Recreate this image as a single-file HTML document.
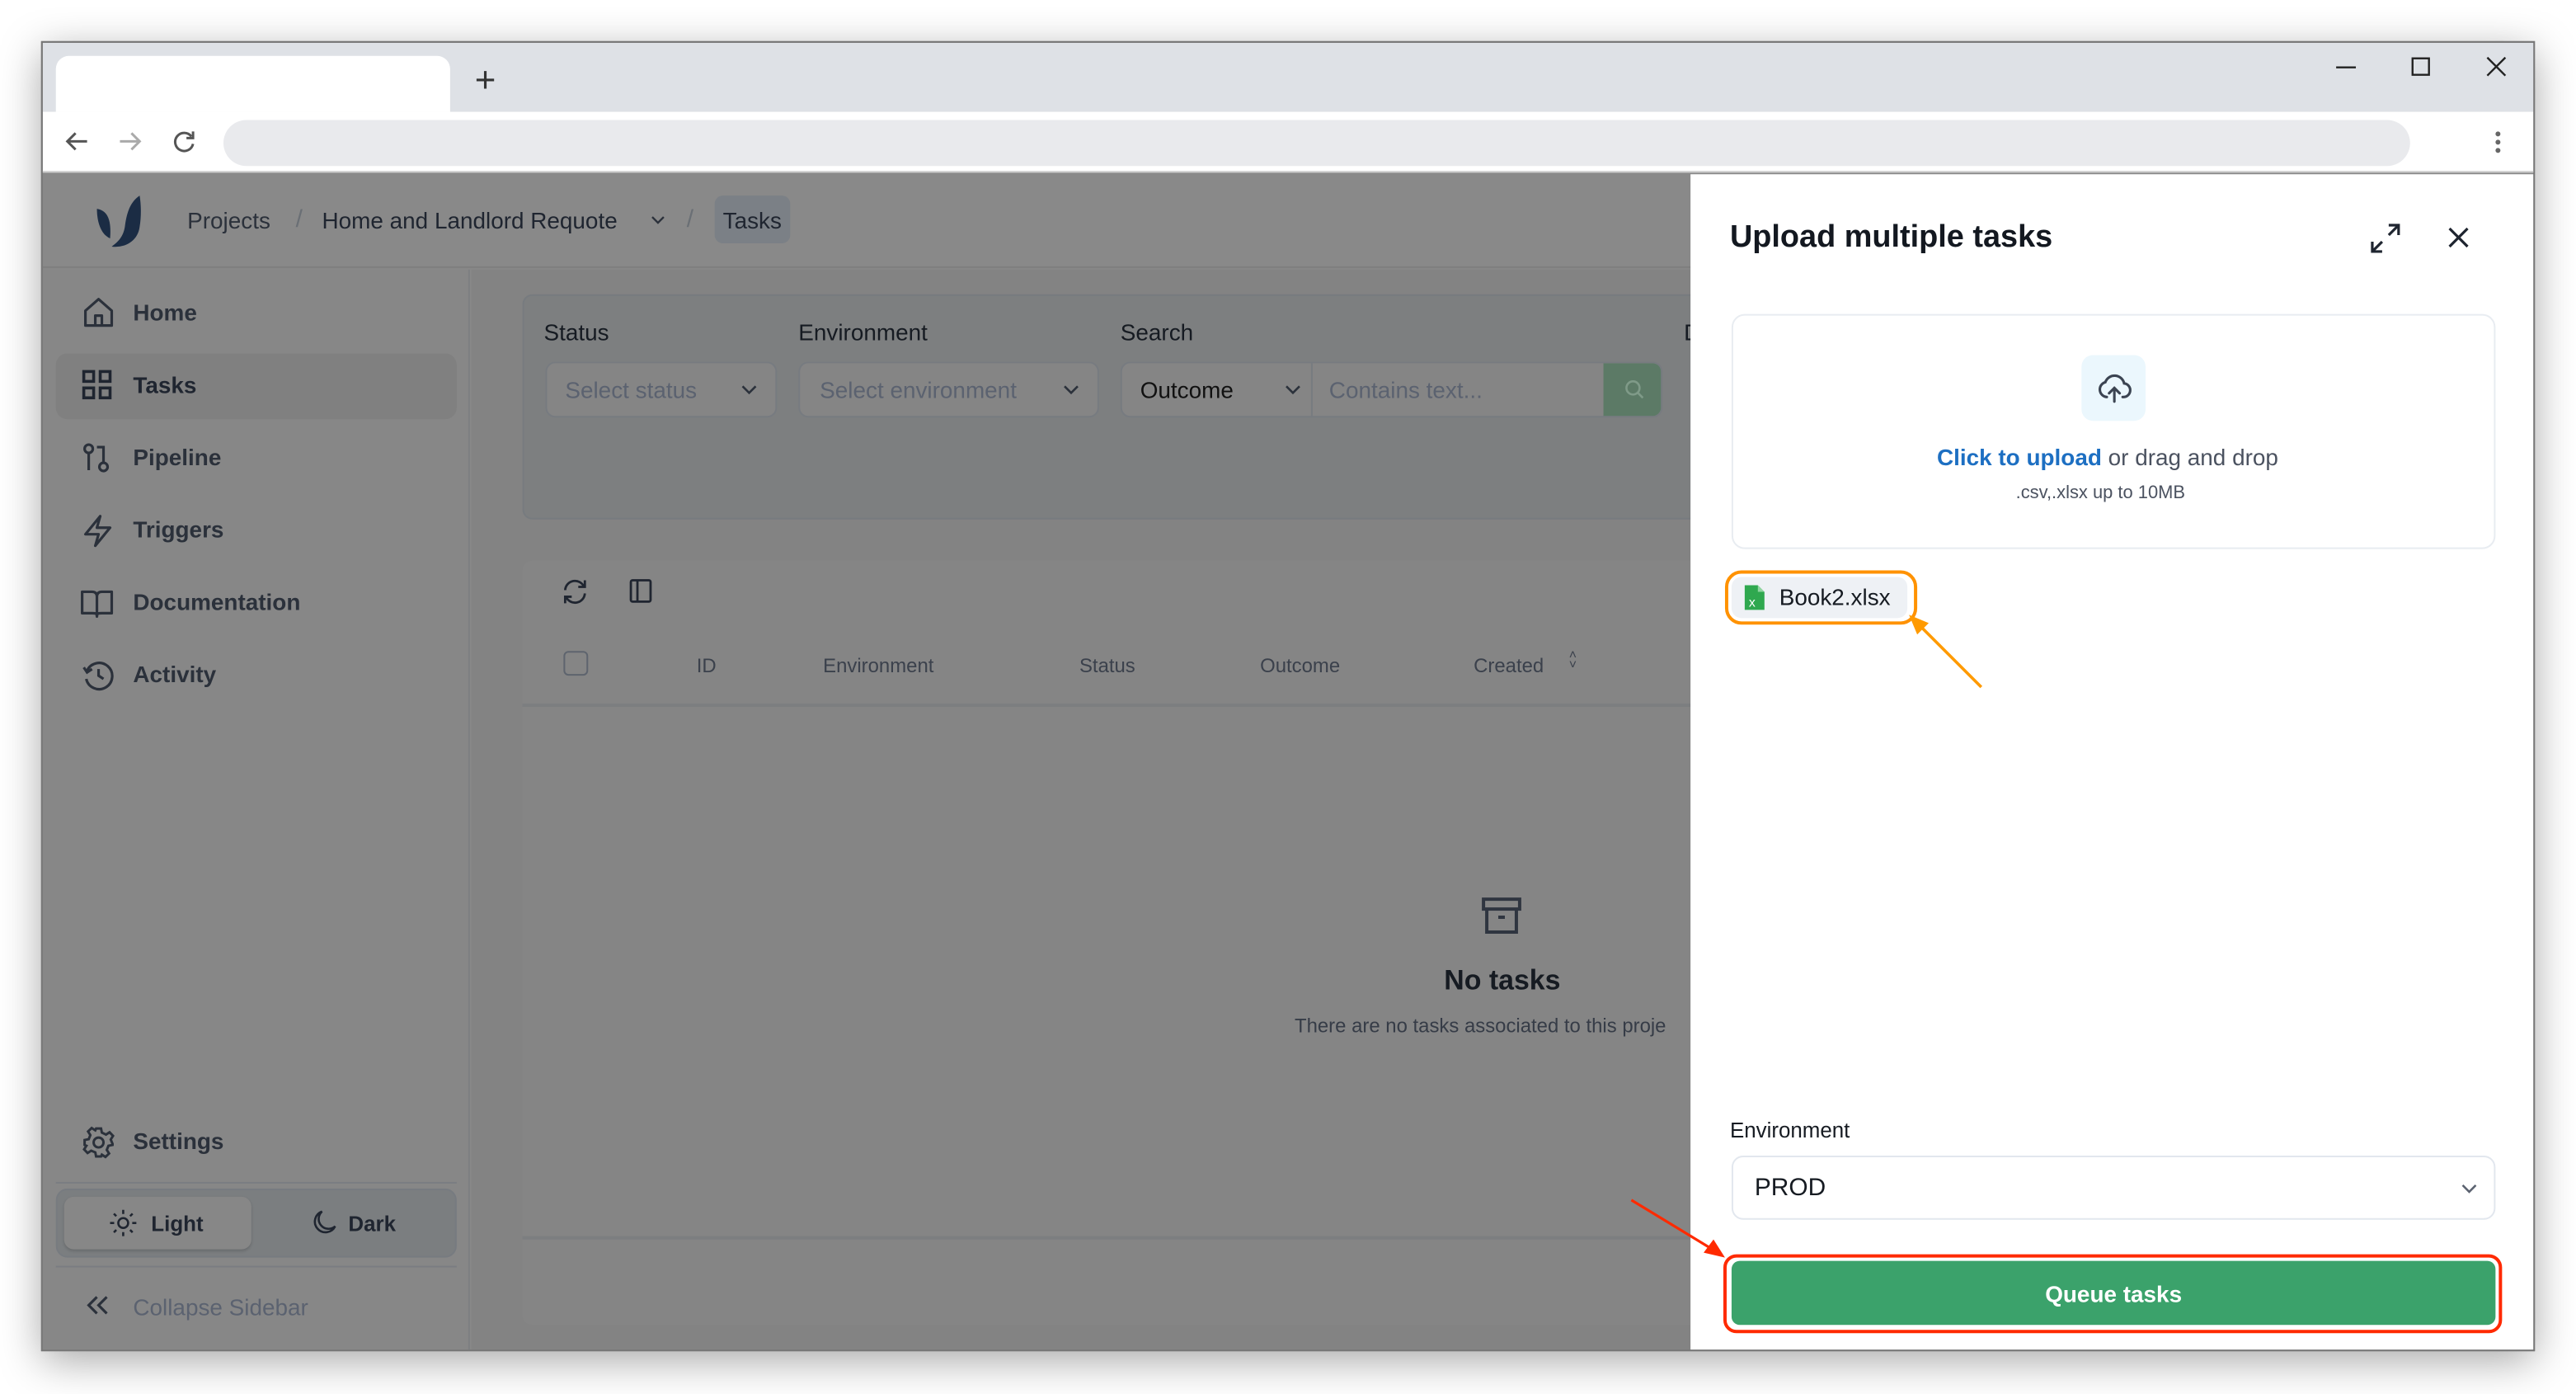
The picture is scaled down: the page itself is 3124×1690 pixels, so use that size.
<!DOCTYPE html>
<html><head><meta charset="utf-8">
<style>
*{box-sizing:border-box;margin:0;padding:0}
html,body{width:3124px;height:1690px;overflow:hidden;background:#fff}
body{font-family:"Liberation Sans",sans-serif}
#s{position:absolute;left:0;top:0;width:1568px;height:848px;transform-origin:0 0;transform:scale(1.99235,1.99292);background:#fff}
.a{position:absolute}
.win{left:25px;top:25px;width:1518px;height:797px;background:#888;box-shadow:0 6px 24px rgba(0,0,0,.35);overflow:hidden;border:1px solid #777}
.t{position:absolute;white-space:nowrap}
.nav{font-size:14px;font-weight:bold;color:#2b313b}
svg{position:absolute;overflow:visible}
</style></head><body><div id="s">
<div class="a win">
  <div class="a" style="left:0;top:0;width:1518px;height:42px;background:#dee1e6"></div>
  <div class="a" style="left:8px;top:8px;width:240px;height:34px;background:#fff;border-radius:8px 8px 0 0"></div>
  <div class="t" style="left:263px;top:10px;font-size:22px;color:#333">+</div>
  <svg style="left:1396px;top:14px" width="14" height="14"><path d="M0 1H12" stroke="#222" stroke-width="1.2"/></svg>
  <svg style="left:1442px;top:9px" width="12" height="12"><rect x=".5" y=".5" width="10" height="10" fill="none" stroke="#222" stroke-width="1.2"/></svg>
  <svg style="left:1488px;top:9px" width="12" height="12"><path d="M0 0L11 11M11 0L0 11" stroke="#222" stroke-width="1.2"/></svg>
  <div class="a" style="left:0;top:42px;width:1518px;height:37px;background:#fff;border-bottom:1px solid #ccc"></div>
  <svg style="left:14px;top:53px" width="14" height="14"><path d="M13 7H1M6 2L1 7L6 12" fill="none" stroke="#555" stroke-width="1.5"/></svg>
  <svg style="left:46px;top:53px" width="14" height="14"><path d="M1 7H13M8 2L13 7L8 12" fill="none" stroke="#aaa" stroke-width="1.5"/></svg>
  <svg style="left:79px;top:53px" width="14" height="14"><path d="M11.5 4A5.5 5.5 0 1 0 12.5 8.5" fill="none" stroke="#555" stroke-width="1.5"/><path d="M12.5 1V5H8.5" fill="none" stroke="#555" stroke-width="1.5"/></svg>
  <div class="a" style="left:110px;top:47px;width:1331px;height:28px;background:#e9eaed;border-radius:14px"></div>
  <div class="a" style="left:1493px;top:54px;width:3px;height:3px;border-radius:50%;background:#666;box-shadow:0 5px 0 #666,0 10px 0 #666"></div>
  <div class="a" style="left:0;top:80px;width:1003px;height:57px;background:#898989;border-bottom:1px solid #7f7f7f"></div>
  <svg style="left:33px;top:93px" width="28" height="32" viewBox="0 0 28 32"><path d="M0 8C6 9 9 14 8 26C3 24 0 17 0 8Z" fill="#1b2c44"/><path d="M26 0C20 4 18 11 17 19C16 25 13 28 9 31C18 32 25 27 26 19C27 13 27 6 26 0Z" fill="#1b2c44"/></svg>
  <div class="t" style="left:88px;top:100px;font-size:14px;color:#2b313b">Projects</div>
  <div class="t" style="left:154px;top:99px;font-size:15px;color:#6a6f75">/</div>
  <div class="t" style="left:170px;top:100px;font-size:14px;color:#1f2530">Home and Landlord Requote</div>
  <svg style="left:370px;top:105px" width="9" height="6"><path d="M1 1L4.5 4.5L8 1" fill="none" stroke="#2b313b" stroke-width="1.2"/></svg>
  <div class="t" style="left:392px;top:99px;font-size:15px;color:#6a6f75">/</div>
  <div class="a" style="left:409px;top:93px;width:46px;height:29px;background:#7b8086;border-radius:5px"></div>
  <div class="t" style="left:414px;top:100px;font-size:14px;color:#1f2530">Tasks</div>
  <div class="a" style="left:0;top:138px;width:260px;height:660px;background:#878787;border-right:1px solid #7d7f82"></div>
  <div class="a" style="left:8px;top:189px;width:244px;height:40px;background:#808080;border-radius:7px"></div>
  <svg style="left:24px;top:154px" width="20" height="20" viewBox="0 0 20 20"><path d="M2 9L10 2L18 9V18H2Z M8 18V12H12V18" fill="none" stroke="#2b313b" stroke-width="1.6" stroke-linejoin="round"/></svg>
  <div class="t nav" style="left:55px;top:156px">Home</div>
  <svg style="left:24px;top:199px" width="18" height="18" viewBox="0 0 18 18"><g fill="none" stroke="#1f2530" stroke-width="1.8"><rect x="1" y="1" width="6" height="6"/><rect x="11" y="1" width="6" height="6"/><rect x="1" y="11" width="6" height="6"/><rect x="11" y="11" width="6" height="6"/></g></svg>
  <div class="t nav" style="left:55px;top:200px;color:#1f2530">Tasks</div>
  <svg style="left:24px;top:243px" width="20" height="20" viewBox="0 0 20 20"><g fill="none" stroke="#2b313b" stroke-width="1.6"><circle cx="4" cy="4" r="2.5"/><path d="M4 6.5V17"/><circle cx="13" cy="15" r="2.5"/><path d="M9 3H13V12.5"/></g></svg>
  <div class="t nav" style="left:55px;top:244px">Pipeline</div>
  <svg style="left:24px;top:287px" width="20" height="20" viewBox="0 0 20 20"><path d="M11 1L2 12H10L8 19L17 8H9Z" fill="none" stroke="#2b313b" stroke-width="1.6" stroke-linejoin="round"/></svg>
  <div class="t nav" style="left:55px;top:288px">Triggers</div>
  <svg style="left:23px;top:331px" width="20" height="20" viewBox="0 0 20 20"><path d="M1 3H7C9 3 10 4 10 6V18C10 16 9 16 7 16H1Z M19 3H13C11 3 10 4 10 6V18C10 16 11 16 13 16H19Z" fill="none" stroke="#2b313b" stroke-width="1.6" stroke-linejoin="round"/></svg>
  <div class="t nav" style="left:55px;top:332px">Documentation</div>
  <svg style="left:24px;top:375px" width="20" height="20" viewBox="0 0 20 20"><g fill="none" stroke="#2b313b" stroke-width="1.6"><path d="M3 7A8 8 0 1 1 2.5 12"/><path d="M1 5L3 8L6 6"/><path d="M10 6V10L13 12"/></g></svg>
  <div class="t nav" style="left:55px;top:376px">Activity</div>
  <svg style="left:24px;top:659px" width="20" height="20" viewBox="0 0 20 20"><g fill="none" stroke="#2b313b" stroke-width="1.5"><circle cx="10" cy="10" r="3"/><path d="M8.5 1.5H11.5L12 4L14.5 5.2L16.7 3.8L18.8 6L17.4 8.2L18.5 10.8L18.5 11.5L16 12L15 14.5L16.4 16.7L14.2 18.8L12 17.4L11.5 18.5H8.5L8 16L5.5 15L3.3 16.4L1.2 14.2L2.6 12L1.5 11.5V8.5L4 8L5 5.5L3.6 3.3L5.8 1.2L8 2.6Z"/></g></svg>
  <div class="t nav" style="left:55px;top:660px">Settings</div>
  <div class="a" style="left:8px;top:693px;width:244px;height:1px;background:#7a7d82"></div>
  <div class="a" style="left:8px;top:697px;width:244px;height:42px;background:#7b7e80;border-radius:7px;border:1px solid #777b80"></div>
  <div class="a" style="left:13px;top:702px;width:114px;height:32px;background:#878787;border-radius:6px;box-shadow:0 1px 2px rgba(0,0,0,.15)"></div>
  <svg style="left:41px;top:710px" width="16" height="16" viewBox="0 0 16 16"><g fill="none" stroke="#1f2530" stroke-width="1.3"><circle cx="8" cy="8" r="3"/><path d="M8 0V2.5M8 13.5V16M0 8H2.5M13.5 8H16M2.3 2.3L3.8 3.8M12.2 12.2L13.7 13.7M2.3 13.7L3.8 12.2M12.2 3.8L13.7 2.3"/></g></svg>
  <div class="t" style="left:66px;top:711px;font-size:13px;font-weight:bold;color:#1f2530">Light</div>
  <svg style="left:163px;top:710px" width="16" height="16" viewBox="0 0 16 16"><path d="M7 1A6.5 6.5 0 1 0 15 10A5 5 0 0 1 7 1Z" fill="none" stroke="#1f2530" stroke-width="1.3"/></svg>
  <div class="t" style="left:186px;top:711px;font-size:13px;font-weight:bold;color:#1f2530">Dark</div>
  <div class="a" style="left:8px;top:744px;width:244px;height:1px;background:#7a7d82"></div>
  <svg style="left:27px;top:762px" width="14" height="12" viewBox="0 0 14 12"><path d="M6 1L1 6L6 11M12 1L7 6L12 11" fill="none" stroke="#2b313b" stroke-width="1.6"/></svg>
  <div class="t" style="left:55px;top:761px;font-size:14px;color:#5b6270">Collapse Sidebar</div>
  <div class="a" style="left:261px;top:138px;width:742px;height:660px;background:#838383"></div>
  <div class="a" style="left:292px;top:153px;width:720px;height:137px;background:#7d7f80;border:1px solid #777b7f;border-radius:6px"></div>
  <div class="t" style="left:305px;top:168px;font-size:14px;color:#161b22">Status</div>
  <div class="t" style="left:460px;top:168px;font-size:14px;color:#161b22">Environment</div>
  <div class="t" style="left:656px;top:168px;font-size:14px;color:#161b22">Search</div>
  <div class="t" style="left:999px;top:168px;font-size:14px;color:#161b22">D</div>
  <div class="a" style="left:306px;top:194px;width:141px;height:34px;background:#858585;border:1px solid #777b80;border-radius:6px"></div>
  <div class="t" style="left:318px;top:203px;font-size:14px;color:#5b6270">Select status</div>
  <svg style="left:425px;top:208px" width="10" height="6"><path d="M1 1L5 5L9 1" fill="none" stroke="#2b313b" stroke-width="1.3"/></svg>
  <div class="a" style="left:460px;top:194px;width:183px;height:34px;background:#858585;border:1px solid #777b80;border-radius:6px"></div>
  <div class="t" style="left:473px;top:203px;font-size:14px;color:#5b6270">Select environment</div>
  <svg style="left:621px;top:208px" width="10" height="6"><path d="M1 1L5 5L9 1" fill="none" stroke="#2b313b" stroke-width="1.3"/></svg>
  <div class="a" style="left:656px;top:194px;width:330px;height:34px;background:#858585;border:1px solid #777b80;border-radius:6px;overflow:hidden">
    <div class="a" style="left:115px;top:0;width:1px;height:34px;background:#777b80"></div>
    <div class="a" style="left:293px;top:0;width:36px;height:34px;background:#5c7a66"></div>
  </div>
  <div class="t" style="left:668px;top:203px;font-size:14px;color:#111">Outcome</div>
  <svg style="left:756px;top:208px" width="10" height="6"><path d="M1 1L5 5L9 1" fill="none" stroke="#2b313b" stroke-width="1.3"/></svg>
  <div class="t" style="left:783px;top:203px;font-size:14px;color:#5b6270">Contains text...</div>
  <svg style="left:963px;top:205px" width="12" height="12"><circle cx="5" cy="5" r="4" fill="none" stroke="#7f9a88" stroke-width="1.3"/><path d="M8 8L11 11" stroke="#7f9a88" stroke-width="1.3"/></svg>
  <div class="a" style="left:292px;top:315px;width:720px;height:465px;background:#858585;border-radius:6px"></div>
  <div class="a" style="left:292px;top:402px;width:720px;height:2px;background:#7c7e80"></div>
  <div class="a" style="left:292px;top:726px;width:720px;height:2px;background:#7c7e80"></div>
  <svg style="left:316px;top:326px" width="16" height="16" viewBox="0 0 16 16"><g fill="none" stroke="#1f2530" stroke-width="1.4"><path d="M2 7A6 6 0 0 1 13.5 5M14 9A6 6 0 0 1 2.5 11"/><path d="M14 1V5H10M2 15V11H6"/></g></svg>
  <svg style="left:357px;top:326px" width="14" height="16"><rect x="1" y="1" width="12" height="13" rx="1" fill="none" stroke="#1f2530" stroke-width="1.4"/><path d="M5 1V14" stroke="#1f2530" stroke-width="1.4"/></svg>
  <div class="a" style="left:317px;top:370px;width:15px;height:15px;border:1px solid #5e646e;border-radius:3px"></div>
  <div class="t" style="left:398px;top:372px;font-size:12px;color:#3b414c">ID</div>
  <div class="t" style="left:475px;top:372px;font-size:12px;color:#3b414c">Environment</div>
  <div class="t" style="left:631px;top:372px;font-size:12px;color:#3b414c">Status</div>
  <div class="t" style="left:741px;top:372px;font-size:12px;color:#3b414c">Outcome</div>
  <div class="t" style="left:871px;top:372px;font-size:12px;color:#3b414c">Created</div>
  <div class="t" style="left:929px;top:370px;font-size:8px;color:#3b414c;line-height:6px">˄<br>˅</div>
  <svg style="left:876px;top:520px" width="24" height="22" viewBox="0 0 24 22"><g fill="none" stroke="#2f3540" stroke-width="2"><rect x="1" y="1" width="22" height="6"/><path d="M3 7V21H21V7M10 12H14"/></g></svg>
  <div class="t" style="left:853px;top:561px;font-size:17px;font-weight:bold;color:#161b22">No tasks</div>
  <div class="t" style="left:762px;top:591px;font-size:12px;color:#363c47">There are no tasks associated to this proje</div>
  <div class="a" style="left:1003px;top:80px;width:515px;height:717px;background:#fff"></div>
  <div class="t" style="left:1027px;top:108px;font-size:19px;font-weight:bold;color:#131820">Upload multiple tasks</div>
  <svg style="left:1417px;top:110px" width="18" height="18" viewBox="0 0 18 18"><g fill="none" stroke="#1f2530" stroke-width="1.6"><path d="M11 1H17V7M17 1L11 7M7 17H1V11M1 17L7 11"/></g></svg>
  <svg style="left:1464px;top:112px" width="13" height="13"><path d="M1 1L12 12M12 1L1 12" stroke="#1f2530" stroke-width="1.6"/></svg>
  <div class="a" style="left:1028px;top:165px;width:465px;height:143px;border:1px solid #e8ecf1;border-radius:8px"></div>
  <div class="a" style="left:1241px;top:190px;width:39px;height:40px;background:#ebf7fd;border-radius:7px"></div>
  <svg style="left:1250px;top:199px" width="22" height="22" viewBox="0 0 24 24"><g fill="none" stroke="#3b4452" stroke-width="1.7" stroke-linecap="round"><path d="M7 18A5 5 0 0 1 6 8.2A6.5 6.5 0 0 1 18.5 9A4.5 4.5 0 0 1 17.5 18"/><path d="M12 21V12M8.5 15.5L12 12L15.5 15.5"/></g></svg>
  <div class="t" style="left:1153px;top:244px;font-size:14px;color:#4b5260"><span style="color:#1d6fc2;font-weight:bold">Click to upload</span> or drag and drop</div>
  <div class="t" style="left:1201px;top:268px;font-size:11px;color:#4b5260">.csv,.xlsx up to 10MB</div>
  <div class="a" style="left:1024px;top:321px;width:117px;height:33px;border:2px solid #ff9200;border-radius:10px"></div>
  <div class="a" style="left:1028px;top:325px;width:107px;height:25px;background:#eef1f5;border-radius:6px"></div>
  <svg style="left:1036px;top:330px" width="12" height="15" viewBox="0 0 12 15"><path d="M0 0H8L12 4V15H0Z" fill="#2fa84f"/><path d="M8 0V4H12" fill="#8fd6a0"/><text x="2.5" y="13" font-size="8" fill="#fff" font-family="Liberation Sans">x</text></svg>
  <div class="t" style="left:1057px;top:329px;font-size:14px;color:#161b22">Book2.xlsx</div>
  <svg style="left:1130px;top:345px" width="60" height="50"><path d="M50 47L12 9" stroke="#ff9a00" stroke-width="1.8"/><path d="M6 3L18 8L11 15Z" fill="#ff9a00"/></svg>
  <div class="t" style="left:1027px;top:654px;font-size:13px;color:#161b22">Environment</div>
  <div class="a" style="left:1028px;top:677px;width:465px;height:39px;border:1px solid #e2e7ee;border-radius:7px"></div>
  <div class="t" style="left:1042px;top:688px;font-size:15px;color:#161b22">PROD</div>
  <svg style="left:1472px;top:694px" width="10" height="6"><path d="M1 1L5 5L9 1" fill="none" stroke="#5b6270" stroke-width="1.3"/></svg>
  <svg style="left:960px;top:695px" width="70" height="50"><path d="M7 9L58 40" stroke="#ff2a00" stroke-width="1.6"/><path d="M64 44L51 41L57 33Z" fill="#ff2a00"/></svg>
  <div class="a" style="left:1023px;top:737px;width:474px;height:48px;border:2px solid #ff2a00;border-radius:8px"></div>
  <div class="a" style="left:1028px;top:741px;width:465px;height:39px;background:#3ba26b;border-radius:5px"></div>
  <div class="t" style="left:1028px;top:753px;width:465px;text-align:center;font-size:14px;font-weight:bold;color:#fff">Queue tasks</div>
</div>
</div></body></html>
